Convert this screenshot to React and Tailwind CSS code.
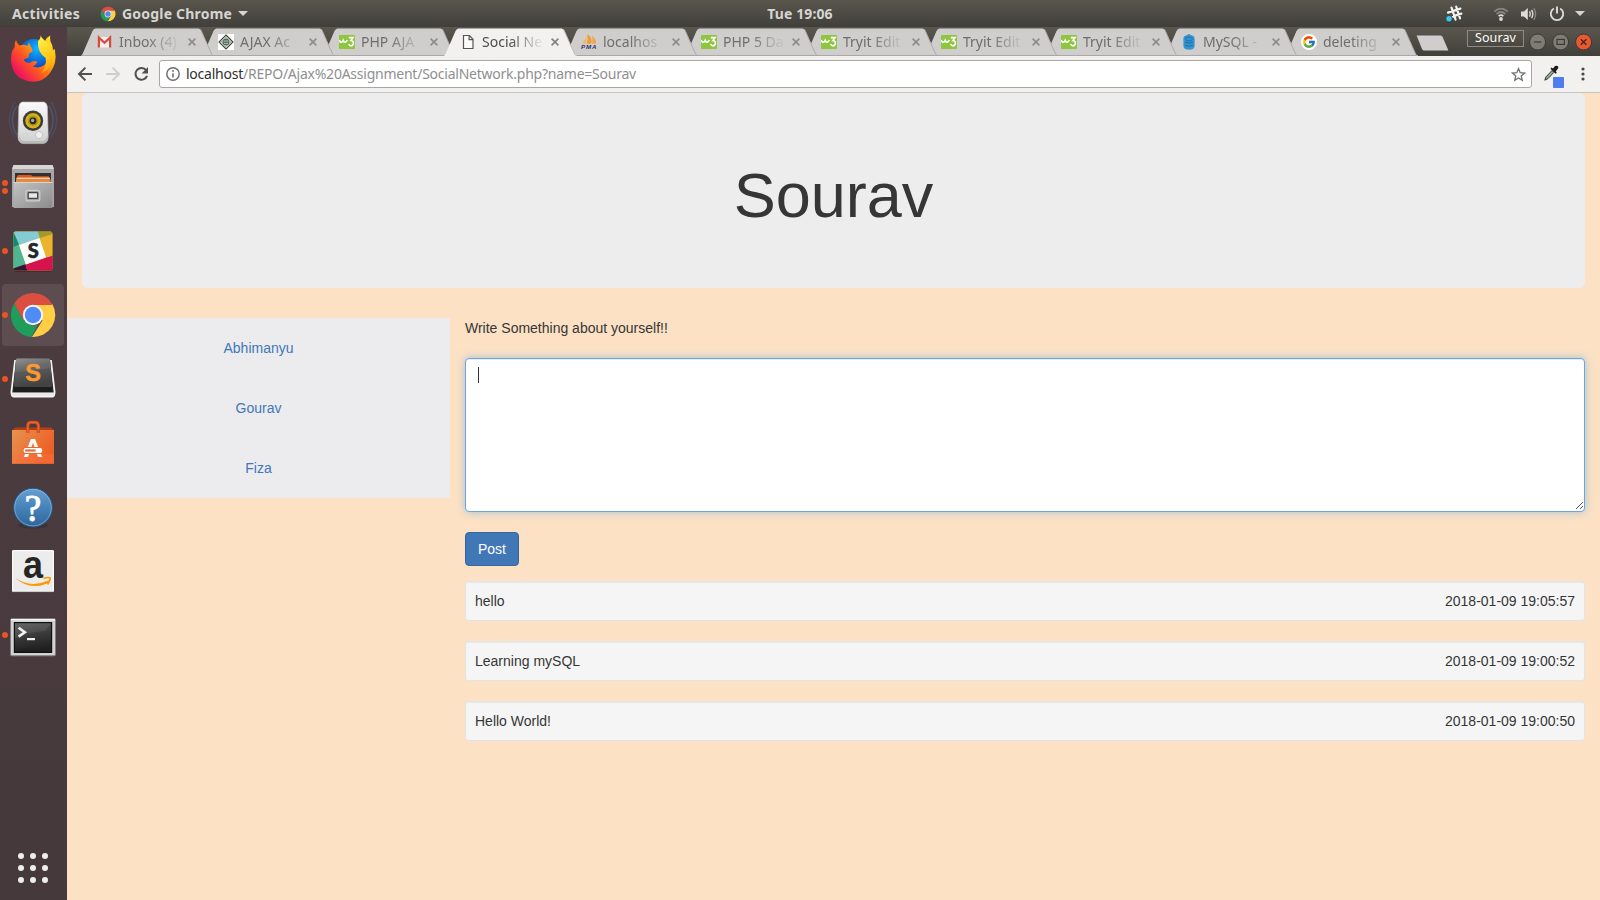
import React from "react";
import { FcGoogle } from "react-icons/fc";

const ui = "font-['Noto_Sans','Open_Sans',sans-serif]";

/* ---------- favicons ---------- */

const W3 = () => (
  <svg width="16" height="14" viewBox="0 0 16 14">
    <rect width="16" height="14" rx="0.8" fill="#8dc63f" />
    <path d="M0.4 5 Q1 7.6 2.6 7.2 Q3.8 6.8 4.2 5.6 Q4.8 7.4 6.2 7.2 Q7.6 6.8 8.2 5" fill="none" stroke="#fff" strokeWidth="1.6" />
    <path d="M9.8 2.6 H14 L11.9 5.5 Q14.6 5.8 14.4 8.4 Q13.8 11.2 11.6 10.8 Q10.2 10.4 9.8 9" fill="none" stroke="#fff" strokeWidth="1.6" />
  </svg>
);

const Gmail = () => (
  <svg width="16" height="16" viewBox="0 0 16 16">
    <rect x="1.2" y="3" width="12" height="10.5" fill="#f4efee" />
    <path d="M1.9 13.6 V3.6 L7.5 8.8 L13.1 3.6 V13.6" fill="none" stroke="#d54b3d" strokeWidth="2.2" />
  </svg>
);

const Diamond = () => (
  <svg width="16" height="16" viewBox="0 0 16 16">
    <rect width="16" height="16" fill="#fff" />
    <path d="M8 1 L15 8 L8 15 L1 8 Z" fill="#e9ece9" stroke="#3c4540" strokeWidth="1.1" />
    <path d="M8 3.4 L12.6 8 L8 12.6 L3.4 8 Z" fill="#c9d1cb" stroke="#59635d" strokeWidth="0.6" />
    <circle cx="8" cy="8" r="3.2" fill="#4d6b57" />
    <path d="M5.6 7 H10.5 M6 9.3 H10" stroke="#c7d8cc" strokeWidth="0.8" />
  </svg>
);

const Page = () => (
  <svg width="16" height="16" viewBox="0 0 16 16">
    <path d="M3.5 1.5 H9.4 L13 5.3 V14.5 H3.5 Z" fill="#fbfbfa" stroke="#555" strokeWidth="1.2" />
    <path d="M9.1 1.6 V5.7 H13" fill="none" stroke="#555" strokeWidth="1.2" />
  </svg>
);

const Pma = () => (
  <svg width="16" height="16" viewBox="0 0 16 16" className="overflow-visible">
    <path d="M5.2 1.5 V9.8 H1 Q4 6.5 5.2 1.5 Z" fill="#f4b76a" />
    <path d="M6.3 0 Q12 4 10.2 9.8 H6 Q7.2 5 6.3 0 Z" fill="#f59a2c" />
    <path d="M10.8 1.8 Q15.5 5 15.2 9.8 H11 Q12 6 10.8 1.8 Z" fill="#f0a64e" />
    <text x="0" y="15.2" fontSize="6.2" fontWeight="bold" fontStyle="italic" fontFamily="Liberation Sans" fill="#2f3166" textLength="15.5">PMA</text>
  </svg>
);

const Db = () => (
  <svg width="16" height="16" viewBox="0 0 16 16">
    <path d="M5 1.6 L8 0 L11 1.6 Q13.6 2 13.6 4.2 V11.8 Q13.6 15.6 8 15.8 Q2.4 15.6 2.4 11.8 V4.2 Q2.4 2 5 1.6 Z" fill="#3594d1" />
    <ellipse cx="8" cy="5" rx="3.4" ry="2" fill="none" stroke="#1d6fa5" strokeWidth="0.9" />
    <path d="M4 8.2 Q8 10.4 12 8.2 M4 11.2 Q8 13.4 12 11.2" fill="none" stroke="#1d6fa5" strokeWidth="1" />
  </svg>
);

const GoogleFav = () => (
  <span className="flex size-4 items-center justify-center rounded-full bg-white">
    <FcGoogle className="size-[14px]" />
  </span>
);

const Chrome = ({ size }) => (
  <svg width={size} height={size} viewBox="0 0 48 48">
    <path d="M24 13 H43.3 A22 22 0 0 1 23 46 L33.5 29.5 Z" fill="#ffce44" />
    <path d="M5.2 12.6 L14.5 29.5 L24 35 L28.5 33.6 L22.6 46 A22 22 0 0 1 5.2 12.6 Z" fill="#1f9d5a" />
    <path d="M5.2 12.6 A22 22 0 0 1 43.6 14 H24 L14.6 29.6 Z" fill="#db4e41" />
    <circle cx="24" cy="24" r="10.2" fill="#f4f4f4" />
    <circle cx="24" cy="24" r="8.2" fill="#4d8bf5" />
  </svg>
);

/* ---------- launcher icons ---------- */

const Icon = ({ children }) => (
  <svg width="48" height="48" viewBox="0 0 48 48" className="overflow-visible">{children}</svg>
);

const Firefox = () => (
  <Icon>
    <defs>
      <linearGradient id="ffBody" x1="0.9" y1="0.1" x2="0.15" y2="0.8">
        <stop offset="0" stopColor="#ffe226" />
        <stop offset="0.35" stopColor="#ffa70c" />
        <stop offset="0.65" stopColor="#ff5a1f" />
        <stop offset="1" stopColor="#f0145c" />
      </linearGradient>
      <radialGradient id="ffGlobe" cx="0.6" cy="0.3" r="0.8">
        <stop offset="0" stopColor="#12b5ff" />
        <stop offset="0.55" stopColor="#0767d8" />
        <stop offset="1" stopColor="#30207e" />
      </radialGradient>
      <linearGradient id="ffTail" x1="0.3" y1="0" x2="0.6" y2="1">
        <stop offset="0" stopColor="#fff14b" />
        <stop offset="0.6" stopColor="#ffca1a" />
        <stop offset="1" stopColor="#ff9a0a" />
      </linearGradient>
    </defs>
    <circle cx="25" cy="20" r="16" fill="url(#ffGlobe)" />
    <path d="M7 5 Q8 9 10.5 10.5 Q15 8.6 18.5 11 L20 7.2 Q20.4 10 22.4 12.4 Q23.4 15 23.6 16.6 L20 18.4 L19.6 22.6 L14.8 24.4 Q16 28 21 27.8 Q24 24.6 28.6 27 Q26 31 23.5 31.6 Q31 34 36.5 29 Q41 24 36.8 17 Q34 10 36 6 Q38 2 41.2 0.5 Q40.6 6 43 9.6 Q44 13 43.8 15.8 Q46 12 46 16 Q48.6 28 40.6 38.4 Q34 46.6 24 46.8 Q12 46.4 6 38 Q0.6 30 2.4 19 Q3.4 14.4 5.6 12 Q5 8 7 5 Z" fill="url(#ffBody)" />
    <path d="M29 6 Q32 3.4 31.5 0.2 Q33 4 39 8 Q46.5 15 44 26 Q42 33 33 38 Q38 30 36.6 23 Q28 17 29 6 Z" fill="url(#ffTail)" />
  </Icon>
);

const Speaker = () => (
  <Icon>
    <defs>
      <linearGradient id="spk" x1="0" y1="0" x2="0" y2="1">
        <stop offset="0" stopColor="#fafafa" />
        <stop offset="1" stopColor="#cfcfcf" />
      </linearGradient>
    </defs>
    <g fill="none" stroke="#4d6488" strokeWidth="1.6" opacity="0.6">
      <path d="M8 7 Q3.4 13 3.4 21 Q3.4 29 8 36" />
      <path d="M6 3 Q0 12 0.4 22 Q1 32 6 38" opacity="0.5" />
      <path d="M40 7 Q44 13 44 21 Q44 29 40 36" />
      <path d="M42 3 Q48 12 47.6 22 Q47 32 42 38" opacity="0.7" />
    </g>
    <path d="M13 3 H35 Q38 4 38.4 8 L39.2 38 Q39 44 34 44.6 H14 Q9.4 44 9 38 L9.8 8 Q10 4 13 3 Z" fill="url(#spk)" stroke="#bdbdbd" strokeWidth="0.6" />
    <path d="M10 35 Q9 44.6 15 44.8 H34 Q39 44 39 36 Q37 42 33 42 H15 Q11 42 10 35 Z" fill="#a8a8a8" opacity="0.55" />
    <circle cx="24" cy="21.8" r="10.2" fill="#3d3f42" />
    <circle cx="24" cy="21.8" r="8.2" fill="#d3b11c" stroke="#1e1e1e" strokeWidth="0.7" />
    <circle cx="24" cy="21.8" r="5" fill="#b09213" />
    <circle cx="24" cy="21.8" r="3.4" fill="#2c2d2b" />
    <circle cx="23.6" cy="21.4" r="1.6" fill="#a9adb2" />
    <circle cx="30" cy="36" r="3.6" fill="#efefef" stroke="#bcbcbc" strokeWidth="0.8" />
    <rect x="14.5" y="34.5" width="4" height="4.5" fill="none" stroke="#d2d2d2" strokeWidth="0.8" />
  </Icon>
);

const Files = () => (
  <Icon>
    <defs>
      <linearGradient id="cab" x1="0" y1="0" x2="1" y2="1">
        <stop offset="0" stopColor="#c2c2c2" />
        <stop offset="1" stopColor="#8c8c8c" />
      </linearGradient>
    </defs>
    <path d="M4.5 2 H43.5 L45 6 V44 H3 V6 Z" fill="#a7a7a7" />
    <path d="M4.5 2 H43.5 L45 6 H3 Z" fill="#d6d6d6" />
    <rect x="6" y="10" width="36" height="12" fill="#35302f" />
    <path d="M8 13.6 L9 12 H22 L24 13.2 H40 V17 H8 Z" fill="#d6591d" />
    <rect x="7.4" y="14.6" width="33.6" height="1.6" fill="#f5d3ae" />
    <rect x="7" y="16.2" width="34.6" height="3" fill="#e78a3c" />
    <path d="M4.6 19 H43.4 V45 H4.6 Z" fill="url(#cab)" />
    <rect x="4.6" y="19" width="38.8" height="1" fill="#d4d4d4" />
    <rect x="17" y="27.3" width="13.8" height="10.6" rx="2" fill="#a0a0a0" stroke="#cfcfcf" strokeWidth="1.2" />
    <rect x="19.2" y="29.6" width="9.4" height="5.8" rx="0.6" fill="#e8e8e8" stroke="#444" strokeWidth="1.2" />
  </Icon>
);

const Slack = () => (
  <Icon>
    <defs>
      <clipPath id="slk"><rect x="4.4" y="4.6" width="39" height="39" rx="2.2" /></clipPath>
    </defs>
    <rect x="4.6" y="5.8" width="38.8" height="39" rx="2.2" fill="#2d2226" opacity="0.6" />
    <g clipPath="url(#slk)">
      <rect x="4" y="4" width="40" height="40" fill="#e9a820" />
      <path d="M4 4 H29 L31 11 L10 18 Z" fill="#83ccd4" />
      <path d="M28.6 4 H44 V7.5 L31 11.6 Z" fill="#a19b2b" />
      <path d="M4 4 L10 18 L17 37.6 L4 42 Z" fill="#4fb592" />
      <path d="M4 4 L10 17.8 L4 20 Z" fill="#16896b" />
      <path d="M4 41.6 L16.4 37.2 L18.6 44 H4 Z" fill="#37152f" />
      <path d="M16.4 37.4 L36.5 30.6 L44 28.4 V44 H18.6 Z" fill="#d6134d" />
      <path d="M31 11 L44 7 V28.6 L37.4 30.6 Z" fill="#ecb32d" />
      <path d="M10 18 L30.5 11 L37.2 30.6 L16.8 37.6 Z" fill="#fff" />
    </g>
    <text x="24.2" y="31.2" fontSize="20" fontWeight="900" fontFamily="Lato" fill="#20262b" stroke="#20262b" strokeWidth="0.6" textAnchor="middle">S</text>
  </Icon>
);

const Sublime = () => (
  <Icon>
    <defs>
      <linearGradient id="sbl" x1="0" y1="0" x2="0.3" y2="1">
        <stop offset="0" stopColor="#8a8a8a" />
        <stop offset="0.4" stopColor="#5f5f5f" />
        <stop offset="1" stopColor="#434343" />
      </linearGradient>
    </defs>
    <path d="M6 6 L2.4 37 Q2.4 41.6 5 41.6 H43 Q45.6 41.6 45.6 37 L42 6 Z" fill="#3a3a3a" stroke="#f4f4f4" strokeWidth="1.8" />
    <path d="M3 37.6 H45 V41 H3 Z" fill="#eaeaea" />
    <path d="M7.6 3.2 H40.4 L43.6 32 V37 H4.4 V32 Z" fill="#1d1d1d" />
    <path d="M8.4 3.2 H39.6 Q41 3.4 41.2 5 L43.2 30.6 Q43 32 42 32 H6 Q4.8 32 4.8 30.6 L6.8 5 Q7 3.4 8.4 3.2 Z" fill="url(#sbl)" />
    <path d="M7 3.8 H41 L41.6 13 Q24 16 6.4 17 Z" fill="#fff" opacity="0.08" />
    <text x="24" y="26" fontSize="23.5" fontWeight="bold" fontFamily="Liberation Sans" fill="#f99a30" stroke="#f99a30" strokeWidth="0.5" textAnchor="middle">S</text>
  </Icon>
);

const Software = () => (
  <Icon>
    <defs>
      <linearGradient id="bag" x1="0" y1="0" x2="1" y2="0.5">
        <stop offset="0" stopColor="#e8924f" />
        <stop offset="1" stopColor="#ec5f25" />
      </linearGradient>
    </defs>
    <path d="M3 11.4 L6 8.4 H42 L45 11.4 Z" fill="#b33e14" />
    <rect x="3" y="11" width="42" height="33.8" fill="url(#bag)" />
    <rect x="3" y="35" width="42" height="9.8" fill="#ff7440" opacity="0.4" />
    <path d="M18.8 14 V7 Q18.8 3.4 22 3.4 H26 Q29.4 3.4 29.4 7 V14" fill="none" stroke="#cf4a1c" strokeWidth="3.2" />
    <path d="M18.8 14 V7 Q18.8 3.4 22 3.4 H26 Q29.4 3.4 29.4 7 V14" fill="none" stroke="#e5672f" strokeWidth="1.4" />
    <text x="24" y="38" fontSize="25" fontWeight="900" fontFamily="Lato" fill="#fff" textAnchor="middle">A</text>
    <rect x="14" y="28" width="20" height="7" rx="2" fill="#ea6a31" />
    <rect x="14.6" y="29" width="18.6" height="5" rx="2" fill="#fff" />
    <rect x="16.2" y="30.4" width="10.4" height="2.2" fill="#ea6a31" />
  </Icon>
);

const Help = () => (
  <Icon>
    <defs>
      <linearGradient id="hlp" x1="0" y1="0" x2="0" y2="1">
        <stop offset="0" stopColor="#6a9fd2" />
        <stop offset="0.5" stopColor="#4583ba" />
        <stop offset="1" stopColor="#2f6598" />
      </linearGradient>
    </defs>
    <ellipse cx="24" cy="42.4" rx="15" ry="3" fill="#2d2327" opacity="0.4" />
    <circle cx="24" cy="24.6" r="19.3" fill="url(#hlp)" stroke="#24588c" strokeWidth="1" />
    <circle cx="24" cy="24.6" r="18.3" fill="none" stroke="#9cc3e6" strokeWidth="0.8" opacity="0.7" />
    <text x="24" y="37.8" fontSize="37" fontFamily="Liberation Serif" fill="#fff" stroke="#fff" strokeWidth="1" textAnchor="middle">?</text>
  </Icon>
);

const Amazon = () => (
  <Icon>
    <rect x="3" y="3" width="42" height="42" rx="1.6" fill="#ececec" />
    <rect x="3.6" y="3.6" width="40.8" height="40.8" rx="1.4" fill="none" stroke="#fafafa" strokeWidth="1.2" />
    <path d="M3.4 44.6 H44.6" stroke="#b9b9b9" strokeWidth="0.8" />
    <text x="23.9" y="31.2" fontSize="38" fontWeight="bold" fontFamily="Liberation Sans" fill="#252525" textAnchor="middle" textLength="20" lengthAdjust="spacingAndGlyphs">a</text>
    <path d="M5.6 30.6 Q21 41.6 39.4 33.6 L40.6 35.4 Q21 44.6 5.6 30.6 Z" fill="#f90" />
    <path d="M34.6 31.6 Q38.6 29.8 41.2 31 Q41.4 34 38.6 37.6" fill="none" stroke="#f90" strokeWidth="1.7" />
  </Icon>
);

const Terminal = () => (
  <Icon>
    <defs>
      <linearGradient id="trm" x1="0" y1="0" x2="0.2" y2="1">
        <stop offset="0" stopColor="#5a5a5a" />
        <stop offset="0.5" stopColor="#3a3a3a" />
        <stop offset="1" stopColor="#202020" />
      </linearGradient>
    </defs>
    <rect x="1.2" y="7.2" width="45.6" height="38" rx="1.6" fill="#8e8e8e" />
    <rect x="2" y="8" width="44" height="36" rx="1" fill="#d2d2d2" />
    <rect x="2" y="8" width="44" height="1.4" fill="#f5f5f5" />
    <rect x="4.8" y="11" width="38.4" height="31" fill="#111" />
    <rect x="6" y="12.2" width="36" height="28.4" fill="url(#trm)" />
    <path d="M6 12.2 H42 L36 20 Q18 21 6 28 Z" fill="#fff" opacity="0.07" />
    <path d="M9.6 16.8 L15.8 21.2 L9.6 25.6" fill="none" stroke="#f1f1f1" strokeWidth="2.6" />
    <rect x="18" y="27" width="8" height="2.2" fill="#f1f1f1" />
  </Icon>
);

const launcher = [
  { id: "firefox", el: <Firefox />, dots: 0 },
  { id: "speaker", el: <Speaker />, dots: 0 },
  { id: "files", el: <Files />, dots: 2 },
  { id: "slack", el: <Slack />, dots: 1 },
  { id: "chrome", el: <Chrome size={48} />, dots: 1, active: true },
  { id: "sublime", el: <Sublime />, dots: 1 },
  { id: "software", el: <Software />, dots: 0 },
  { id: "help", el: <Help />, dots: 0 },
  { id: "amazon", el: <Amazon />, dots: 0 },
  { id: "terminal", el: <Terminal />, dots: 1 },
];

const Launcher = () => (
  <aside className="flex w-[67px] shrink-0 flex-col items-center gap-[2px] bg-linear-to-b from-[#4f3d42] to-[#45393c] pt-px pr-px pb-[17px]">
    {launcher.map((item) => (
      <div
        key={item.id}
        className={`relative flex h-[62px] w-[62px] items-center justify-center rounded-[4px] ${item.active ? "bg-[#5d4d51]" : ""}`}
      >
        {item.el}
        <div className="absolute top-0 left-0 flex h-full flex-col items-center justify-center gap-[2px]">
          {Array.from({ length: item.dots }, (_, i) => (
            <span key={i} className="size-[6px] rounded-full bg-[#e95420]" />
          ))}
        </div>
      </div>
    ))}
    <div className="mt-auto grid grid-cols-3 gap-[6px]">
      {Array.from({ length: 9 }, (_, i) => (
        <span key={i} className="size-[6px] rounded-full bg-[#eeeeec]" />
      ))}
    </div>
  </aside>
);

/* ---------- system bar ---------- */

const TopBar = () => (
  <header className={`${ui} grid h-[27px] shrink-0 grid-cols-[1fr_auto_1fr] items-center bg-linear-to-b from-[#59564d] to-[#403f3a] text-[14px] font-bold text-[#d6d5d1]`}>
    <div className="flex items-center pl-3">
      <span className="w-[68px] tracking-[0.3px] whitespace-nowrap">Activities</span>
      <span className="ml-[20px] flex"><Chrome size={16} /></span>
      <span className="ml-[6px] tracking-[0.2px] whitespace-nowrap">Google Chrome</span>
      <svg width="10" height="5" viewBox="0 0 10 5" className="ml-[6px]"><path d="M0 0 H10 L5 5 Z" fill="#d6d5d1" /></svg>
    </div>
    <span className="tracking-[0.1px]">Tue 19:06</span>
    <div className="flex items-center justify-end pr-[15px]">
      <svg width="18" height="18" viewBox="0 0 18 18">
        <g stroke="#f2f2f2" strokeWidth="2.2" strokeLinecap="round">
          <path d="M6.5 2.6 L10.6 14.6 M11.2 1.6 L15 13.4 M3 7.6 L15.4 3.6 M4.6 12.4 L16.4 8.6" />
        </g>
        <circle cx="4" cy="13.8" r="3.3" fill="#3fc6ea" stroke="#35342f" strokeWidth="0.8" />
      </svg>
      <svg width="16" height="14" viewBox="0 0 16 14" className="ml-[30px]" fill="none">
        <path d="M1.2 4.6 Q8 -1.4 14.8 4.6" stroke="#87857e" strokeWidth="1.8" />
        <path d="M3.6 7 Q8 3 12.4 7" stroke="#87857e" strokeWidth="1.8" />
        <path d="M5.6 9.2 Q8 7.2 10.4 9.2" stroke="#dddcd8" strokeWidth="1.6" />
        <circle cx="8" cy="12" r="1.9" fill="#dddcd8" />
      </svg>
      <svg width="16" height="14" viewBox="0 0 16 14" className="ml-[11.5px]" fill="none">
        <path d="M0 4.4 H3 L6.8 1 V13 L3 9.6 H0 Z" fill="#dddcd8" />
        <path d="M8.6 4.4 Q10 7 8.6 9.6" stroke="#dddcd8" strokeWidth="1.4" />
        <path d="M10.6 2.8 Q13 7 10.6 11.2" stroke="#dddcd8" strokeWidth="1.4" />
        <path d="M12.8 1 Q16.4 7 12.8 13" stroke="#87857e" strokeWidth="1.4" />
      </svg>
      <svg width="16" height="16" viewBox="0 0 16 16" className="ml-[12.5px]" fill="none">
        <path d="M4.8 2.6 A6.2 6.2 0 1 0 11.2 2.6" stroke="#dddcd8" strokeWidth="1.8" />
        <path d="M8 0.6 V7.6" stroke="#dddcd8" strokeWidth="1.9" />
      </svg>
      <svg width="10" height="5" viewBox="0 0 10 5" className="ml-[10px]"><path d="M0 0 H10 L5 5 Z" fill="#d6d5d1" /></svg>
    </div>
  </header>
);

/* ---------- browser chrome ---------- */

const tabs = [
  { title: "Inbox (4)", icon: <Gmail />, place: "z-[19] mr-[-12px]" },
  { title: "AJAX Ac", icon: <Diamond />, place: "z-[18] mr-[-12px]" },
  { title: "PHP AJA", icon: <W3 />, place: "z-[17] mr-[-12px]" },
  { title: "Social Ne", icon: <Page />, active: true, place: "z-[30] mr-[-12px]" },
  { title: "localhos", icon: <Pma />, place: "z-[15] mr-[-13px]" },
  { title: "PHP 5 Da", icon: <W3 />, place: "z-[14] mr-[-13px]" },
  { title: "Tryit Edit", icon: <W3 />, place: "z-[13] mr-[-13px]" },
  { title: "Tryit Edit", icon: <W3 />, place: "z-[12] mr-[-13px]" },
  { title: "Tryit Edit", icon: <W3 />, place: "z-[11] mr-[-13px]" },
  { title: "MySQL -", icon: <Db />, place: "z-[10] mr-[-13px]" },
  { title: "deleting", icon: <GoogleFav />, place: "z-[9]" },
];

const Tab = ({ tab }) => (
  <div className={`relative ${tab.place} flex h-[28px] w-[133px] shrink-0 items-center pb-px pl-[16px]`}>
    <svg className="absolute inset-0" width="134" height="28" viewBox="0 0 134 28">
      <path
        d="M0 28 L1.5 26 L11.5 3 Q12.8 0.5 14.5 0.5 H117.5 Q119.4 0.5 120.4 3 L130.6 26 Q131.4 27.6 133 28 Z"
        fill={tab.active ? "#f2f1f0" : "#d0cecd"}
      />
      <path d="M119.6 1.4 L130.6 26 Q131.4 27.6 133 28" fill="none" stroke={tab.active ? "#c4c2c0" : "#aeacaa"} strokeWidth="1" />
      {!tab.active && <path d="M1 27.5 H133" stroke="#a9a8a6" />}
    </svg>
    <span className="relative flex w-4 justify-center">{tab.icon}</span>
    <span
      className={`relative ml-[6px] w-[62px] mask-r-from-45% mask-r-to-100% text-[14px] whitespace-nowrap ${tab.active ? "text-[#4c4c4c]" : "text-[#6f6e6d]"}`}
    >
      {tab.title}
    </span>
    <svg width="8" height="8" viewBox="0 0 8 8" className="relative ml-[7px]">
      <path d="M0.6 0.6 L7.4 7.4 M7.4 0.6 L0.6 7.4" stroke={tab.active ? "#808080" : "#8d8c8b"} strokeWidth="1.6" />
    </svg>
  </div>
);

const TabStrip = () => (
  <div className={`${ui} flex h-[29px] shrink-0 bg-linear-to-b from-[#5a584e] to-[#413f3a] pt-px`}>
    <div className="flex w-[1348px] shrink-0 pl-[14px]">
      {tabs.map((t, i) => <Tab key={i} tab={t} />)}
    </div>
    <div className="flex flex-1 items-center">
      <svg width="33" height="16" viewBox="0 0 33 16" className="mt-px ml-px">
        <path d="M0.6 0.5 H24.5 Q26 0.5 26.6 2 L32.4 15.5 H8.4 Q6.6 15.5 6 14 Z" fill="#d0cecd" />
      </svg>
      <span className="mb-[8px] ml-[18px] flex h-[17px] w-[57px] items-center justify-center border border-[#8b8a83] pt-px text-[12.5px] tracking-[0.1px] text-white">Sourav</span>
      <svg width="64" height="18" viewBox="0 0 64 18" className="ml-[5px]" fill="none">
        <circle cx="8.6" cy="9" r="8" fill="#7e7c74" stroke="#3a3934" />
        <path d="M4.8 9 H12.4" stroke="#3c3b37" strokeWidth="1.2" />
        <circle cx="31.6" cy="9" r="8" fill="#7e7c74" stroke="#3a3934" />
        <rect x="28" y="6.4" width="7.4" height="5" stroke="#3c3b37" strokeWidth="1.2" />
        <circle cx="54.6" cy="9" r="8" fill="#e9582f" stroke="#3a3934" />
        <path d="M51.8 6.2 L57.4 11.8 M57.4 6.2 L51.8 11.8" stroke="#45281d" strokeWidth="1.4" />
      </svg>
    </div>
  </div>
);

const Toolbar = () => (
  <div className={`${ui} flex h-[37px] shrink-0 items-center border-b border-[#c6c5c4] bg-[#f2f1f0]`}>
    <svg width="74" height="16" viewBox="0 0 74 16" className="ml-[10px]" fill="none">
      <path d="M15 8 H2.4 M8.4 1.6 L2 8 L8.4 14.4" stroke="#505050" strokeWidth="2" />
      <path d="M29 8 H41.4 M35.6 1.6 L42 8 L35.6 14.4" stroke="#cfcecd" strokeWidth="2" />
      <path d="M69.2 4.4 A5.9 5.9 0 1 0 70 9.8" stroke="#505050" strokeWidth="2" />
      <path d="M71 1 V7.4 H64.6 Z" fill="#505050" />
    </svg>
    <div className="ml-[8px] flex h-[28px] w-[1373px] items-center rounded-[3px] border border-[#a8a7a6] bg-white">
      <svg width="14" height="14" viewBox="0 0 14 14" className="ml-[6px]" fill="none">
        <circle cx="7" cy="7" r="6.2" stroke="#6a6a6a" strokeWidth="1.4" />
        <path d="M7 6.2 V10.6" stroke="#6a6a6a" strokeWidth="1.5" />
        <circle cx="7" cy="4" r="0.95" fill="#6a6a6a" />
      </svg>
      <span className="mb-[2px] ml-[6px] text-[14px] tracking-[-0.24px] whitespace-nowrap text-[#8f8f8f]">
        <span className="text-[#303030]">localhost</span>/REPO/Ajax%20Assignment/SocialNetwork.php?name=Sourav
      </span>
      <svg width="15" height="15" viewBox="0 0 15 15" className="mr-[5.5px] ml-auto" fill="none">
        <path d="M7.5 1.6 L9.2 5.7 L13.6 6.1 L10.2 9 L11.3 13.3 L7.5 11 L3.7 13.3 L4.8 9 L1.4 6.1 L5.8 5.7 Z" stroke="#707070" strokeWidth="1.3" />
      </svg>
    </div>
    <svg width="22" height="24" viewBox="0 0 22 24" className="mt-[4px] ml-[11px]">
      <path d="M1.8 16.2 L3 12.8 L9 6.6 L10.8 8.4 L5 14.6 Z" fill="#8fae92" stroke="#2c3a2e" strokeWidth="1" />
      <path d="M7.4 4.8 L8.6 3.6 L10 4.6 L12 2 Q14.6 1 15.4 3 Q15.6 4.6 13.6 6.2 L12.8 7.4 L13.8 8.6 L12.6 9.8 Z" fill="#1b1b1b" />
      <rect x="10" y="13" width="11" height="11" rx="0.8" fill="#4e7df2" />
    </svg>
    <svg width="4" height="14" viewBox="0 0 4 14" className="ml-[15.5px]" fill="#484848">
      <circle cx="2" cy="2" r="1.6" />
      <circle cx="2" cy="7" r="1.6" />
      <circle cx="2" cy="12" r="1.6" />
    </svg>
  </div>
);

/* ---------- page ---------- */

const friends = ["Abhimanyu", "Gourav", "Fiza"];
const posts = [
  { text: "hello", time: "2018-01-09 19:05:57" },
  { text: "Learning mySQL", time: "2018-01-09 19:00:52" },
  { text: "Hello World!", time: "2018-01-09 19:00:50" },
];

const SocialPage = () => (
  <main className="flex-1 overflow-hidden bg-[#fce1c4] font-['Liberation_Sans',Arial,sans-serif] text-[14px] leading-5 text-[#363636]">
    <section className="mx-[15px] mb-[30px] flex h-[195px] justify-center rounded-[6px] bg-[#ededed] pt-[68px]">
      <h1 className="text-[63px] leading-[69px]">Sourav</h1>
    </section>
    <div className="flex items-start">
      <nav className="flex w-[383px] shrink-0 flex-col bg-[#ececee] text-center text-[#3f78b8]">
        {friends.map((f) => <a key={f} className="py-5">{f}</a>)}
      </nav>
      <div className="flex flex-1 flex-col pr-[15px] pl-[15px]">
        <p>Write Something about yourself!!</p>
        <div className="relative mt-5 flex h-[154px] rounded-[4px] border border-[#6ba5e2] bg-white px-3 py-[8px] shadow-[inset_0_1px_1px_rgba(0,0,0,0.075),0_0_8px_rgba(102,175,233,0.6)]">
          <span className="h-4 w-px bg-[#333]" />
          <svg width="9" height="9" viewBox="0 0 9 9" className="absolute right-[0px] bottom-[1px]">
            <path d="M1 8 L8 1 M5 8 L8 5" stroke="#555" strokeWidth="1" />
          </svg>
        </div>
        <button className="mt-5 h-[34px] w-[54px] rounded-[4px] border border-[#3567a0] bg-[#4277b7] text-white">Post</button>
        <ul className="mt-[15px] flex flex-col gap-5">
          {posts.map((p) => (
            <li key={p.time} className="flex justify-between rounded-[3px] border border-[#e3e3e3] bg-[#f5f5f5] p-[9px] shadow-[inset_0_1px_1px_rgba(0,0,0,0.05)]">
              <span>{p.text}</span>
              <span>{p.time}</span>
            </li>
          ))}
        </ul>
      </div>
    </div>
  </main>
);

export default function App() {
  return (
    <div className="flex h-[900px] w-[1600px] flex-col overflow-hidden">
      <TopBar />
      <div className="flex min-h-0 flex-1">
        <Launcher />
        <div className="flex min-w-0 flex-1 flex-col">
          <TabStrip />
          <Toolbar />
          <SocialPage />
        </div>
      </div>
    </div>
  );
}
